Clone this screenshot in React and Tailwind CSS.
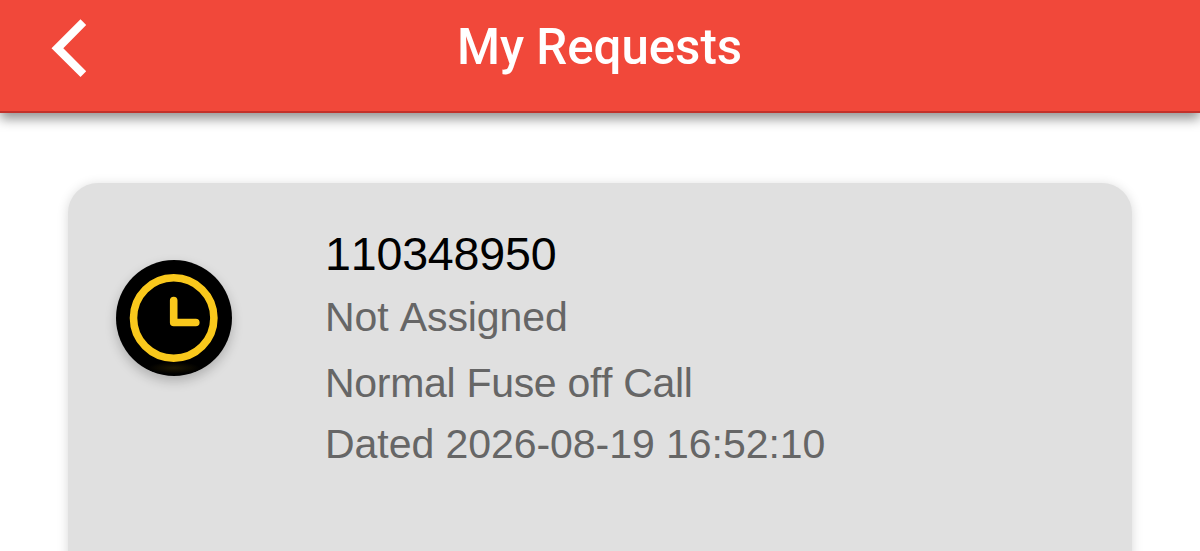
function Header({ title }) {
  return (
    <header className="relative flex h-[113px] items-start border-b-2 border-[#c2312b] bg-[#f1483a] shadow-[0_6px_11px_0_rgba(0,0,0,0.42)]">
      <button type="button" aria-label="Back" className="ml-[51px] mt-[19px] w-9 text-white">
        <svg viewBox="0 0 36 58" className="h-[58px] w-9" fill="currentColor">
          <path d="M29.5 0.3 35.2 6 12.3 29.2 35.2 52.2 29.5 58 0.5 29.2Z" />
        </svg>
      </button>
      <h1 className="mr-[88px] flex-1 text-center font-[Roboto,sans-serif] text-[49.2px] leading-[95px] font-medium text-white">
        {title}
      </h1>
    </header>
  );
}

function PendingIcon() {
  return (
    <div className="size-[116px] shrink-0 overflow-hidden rounded-full bg-black shadow-[0_5px_12px_0_rgba(0,0,0,0.22)]">
      <svg viewBox="0 0 116 116" className="size-full" fill="none" stroke="#f9c81c">
        <defs>
          <radialGradient id="glow">
            <stop offset="0" stopColor="#1d1703" />
            <stop offset="1" stopColor="#000" />
          </radialGradient>
        </defs>
        <ellipse cx="58" cy="108" rx="26" ry="6" fill="url(#glow)" stroke="none" />
        <circle cx="57.7" cy="58" r="40.2" strokeWidth="7.6" />
        <path d="M57.7 40.5V62.5H79.8" strokeWidth="7.6" strokeLinecap="round" strokeLinejoin="round" />
      </svg>
    </div>
  );
}

function RequestCard({ request }) {
  return (
    <article className="mx-[68px] mt-[70px] flex h-[420px] rounded-[30px] bg-[#e0e0e0] pl-12 shadow-[0_2px_12px_0_rgba(0,0,0,0.16)]">
      <div className="pt-[77px]">
        <PendingIcon />
      </div>
      <div className="ml-[93px] pt-[41px] font-['Liberation_Sans',sans-serif] text-[41px] leading-[60px] whitespace-nowrap text-[#666] [font-kerning:none]">
        <h2 className="text-[46.6px] tracking-[-0.2px] text-black">{request.id}</h2>
        <p className="mt-[3px] tracking-[-0.1px]">{request.status}</p>
        <p className="mt-[6px] tracking-[-0.3px]">{request.type}</p>
        <p className="mt-px tracking-[-0.05px]">Dated {request.date}</p>
      </div>
    </article>
  );
}

const request = {
  id: '110348950',
  status: 'Not Assigned',
  type: 'Normal Fuse off Call',
  date: '2026-08-19 16:52:10',
};

export default function App() {
  return (
    <div className="h-[551px] overflow-hidden bg-white">
      <Header title="My Requests" />
      <RequestCard request={request} />
    </div>
  );
}
